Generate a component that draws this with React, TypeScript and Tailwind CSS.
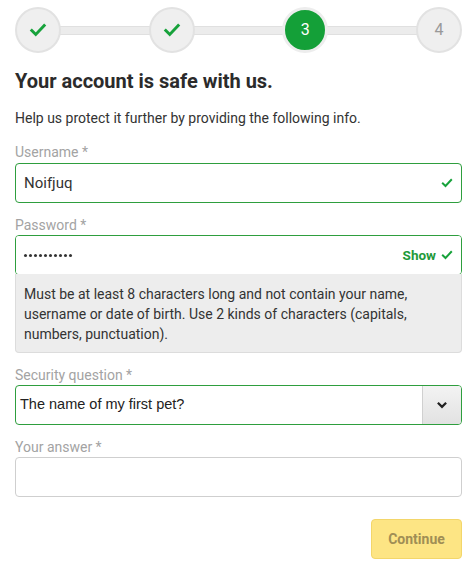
import React from "react";

const Check = ({ className = "" }: { className?: string }) => (
  <svg viewBox="0 0 16 16" className={className} fill="none">
    <path d="M2.5 8.5 L6 12 L13.5 4" stroke="currentColor" strokeWidth="2.6" strokeLinecap="square" strokeLinejoin="miter" />
  </svg>
);

const dots = [0, 1, 2, 3, 4, 5, 6, 7, 8, 9];

export default function App() {
  return (
    <div className="w-[475px] h-[567px] bg-white text-[#333] overflow-hidden" style={{ fontFamily: "Roboto, 'Liberation Sans', sans-serif" }}>
      {/* Stepper */}
      <div className="flex items-center pl-[15px] pr-[13px] pt-[7px]">
        <div className="w-[46px] h-[46px] rounded-full bg-[#efefef] border-2 border-[#e2e2e2] flex items-center justify-center z-10">
          <Check className="w-[18px] h-[18px] text-[#17a23b]" />
        </div>
        <div className="flex-1 h-[9px] bg-[#ececec] border-y border-[#e0e0e0] -mx-[2px]" />
        <div className="w-[46px] h-[46px] rounded-full bg-[#efefef] border-2 border-[#e2e2e2] flex items-center justify-center z-10">
          <Check className="w-[18px] h-[18px] text-[#17a23b]" />
        </div>
        <div className="flex-1 h-[9px] bg-[#ececec] border-y border-[#e0e0e0] -mx-[2px]" />
        <div className="w-[46px] h-[46px] rounded-full bg-[#14a038] border-[3px] border-[#ededed] flex items-center justify-center z-10 text-white text-[16px]">
          3
        </div>
        <div className="flex-1 h-[9px] bg-[#ececec] border-y border-[#e0e0e0] -mx-[2px]" />
        <div className="w-[46px] h-[46px] rounded-full bg-[#efefef] border-2 border-[#e2e2e2] flex items-center justify-center z-10 text-[#999] text-[16px]">
          4
        </div>
      </div>

      <div className="pl-[15px] pr-[13px]">
        <h1 className="text-[20px] font-bold leading-[24px] mt-[16px] text-[#2b2b2b]">Your account is safe with us.</h1>
        <p className="text-[14px] leading-[20px] mt-[15px] text-[#333]">Help us protect it further by providing the following info.</p>

        <label className="block text-[14px] leading-[20px] text-[#a3a3a3] mt-[14px]">Username *</label>
        <div className="mt-[1px] h-[40px] border border-[#2e9e3e] rounded-[4px] flex items-center px-[8px]">
          <span className="flex-1 text-[15px] text-[#333]">Noifjuq</span>
          <Check className="w-[12px] h-[12px] text-[#17a23b]" />
        </div>

        <label className="block text-[14px] leading-[20px] text-[#a3a3a3] mt-[12px]">Password *</label>
        <div className="border border-[#2e9e3e] rounded-[4px] overflow-hidden">
          <div className="h-[38px] flex items-center px-[8px] bg-white">
            <div className="flex-1 flex items-center gap-[2px]">
              {dots.map((d) => (
                <span key={d} className="w-[3px] h-[3px] rounded-full bg-[#333]" />
              ))}
            </div>
            <span className="text-[13.5px] font-bold text-[#1f9a3a] mr-[5px]">Show</span>
            <Check className="w-[12px] h-[12px] text-[#17a23b]" />
          </div>
        </div>
        <div className="-mt-[1px] bg-[#ededed] border border-[#dcdcdc] border-t-0 rounded-b-[4px] px-[8px] pt-[10px] pb-[8px] text-[14px] leading-[20px] text-[#333]">
          Must be at least 8 characters long and not contain your name, username or date of birth. Use 2 kinds of characters (capitals, numbers, punctuation).
        </div>

        <label className="block text-[14px] leading-[20px] text-[#a3a3a3] mt-[12px]">Security question *</label>
        <div className="h-[40px] border border-[#2e9e3e] rounded-[4px] flex items-stretch overflow-hidden">
          <span className="flex-1 flex items-center px-[4px] text-[14.5px] text-[#222]" style={{ fontFamily: "'Liberation Sans', Arial, sans-serif" }}>
            The name of my first pet?
          </span>
          <div className="w-[39px] bg-gradient-to-b from-[#f3f3f3] to-[#e2e2e2] border-l border-[#d0d0d0] flex items-center justify-center">
            <svg viewBox="0 0 16 16" className="w-[12px] h-[12px]" fill="none">
              <path d="M2.5 5 L8 10.5 L13.5 5" stroke="#222" strokeWidth="3" />
            </svg>
          </div>
        </div>

        <label className="block text-[14px] leading-[20px] text-[#a3a3a3] mt-[12px]">Your answer *</label>
        <div className="h-[40px] border border-[#cfcfcf] rounded-[4px]" />

        <div className="flex justify-end mt-[22px]">
          <button className="w-[91px] h-[40px] rounded-[4px] bg-[#fde584] border border-[#f3d66a] text-[14px] font-bold text-[#a08e55]">
            Continue
          </button>
        </div>
      </div>
    </div>
  );
}
